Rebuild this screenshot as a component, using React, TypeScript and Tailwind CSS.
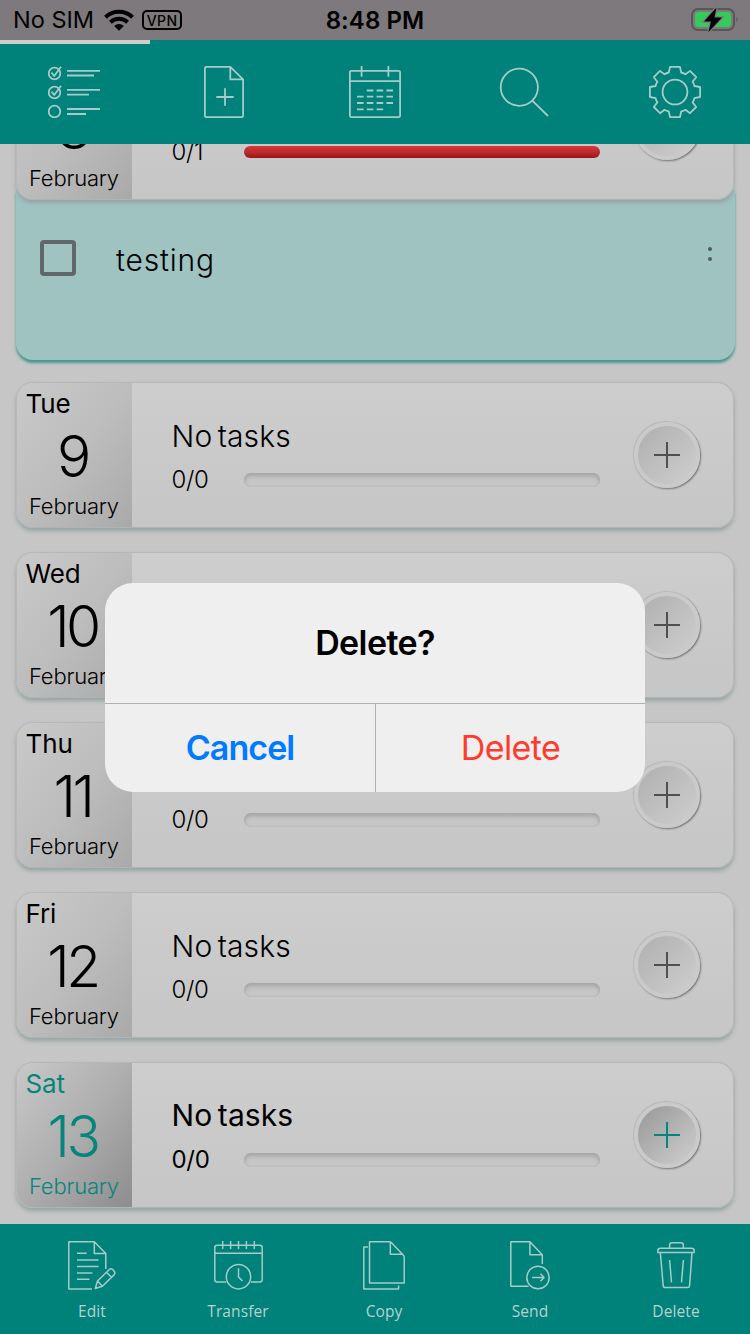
import type { ReactNode } from "react";

const strokeIcon = {
  fill: "none",
  stroke: "#a6cbc8",
  strokeWidth: 1.8,
  strokeLinejoin: "round" as const,
};

function TasksIcon() {
  return (
    <svg className="mr-[2px]" width="52" height="52" viewBox="0 0 52 52" {...strokeIcon}>
      <circle cx="6.5" cy="7.5" r="5.8" />
      <path d="M3.5 6.5 6.2 10 13 .8" />
      <circle cx="6.5" cy="26.5" r="5.8" />
      <path d="M3.5 25.5 6.2 29 13 19.8" />
      <circle cx="6.5" cy="45.5" r="5.8" />
      <path d="M19 4.8H52M19 9.5H46M19 23.8H52M19 28.7H41M19 43H52M19 48H38" />
    </svg>
  );
}

function NewPageIcon() {
  return (
    <svg className="mr-[2px]" width="40" height="52" viewBox="0 0 40 52" {...strokeIcon}>
      <path d="M26.3.9H2.2Q.9.9.9 2.2V49.8Q.9 51.1 2.2 51.1H37.8Q39.1 51.1 39.1 49.8V13.4ZM26.3.9V13.4H39.2M12.3 31H29.7M21 22.3V39.7" />
    </svg>
  );
}

function CalendarIcon() {
  return (
    <svg width="52" height="52" viewBox="0 0 52 52" {...strokeIcon}>
      <rect x=".9" y="4.8" width="50.2" height="46.3" rx="1.4" />
      <path d="M.8 15.2H51.2M12.6 0V10.7M39.4 0V10.7" />
      <path d="M17.8 24.5H45M8 30.7H45M8 37H45M8 43.3H35.5" strokeDasharray="6.6 3.2" />
    </svg>
  );
}

function SearchIcon() {
  return (
    <svg className="mr-[2px]" width="52" height="52" viewBox="0 0 52 52" {...strokeIcon}>
      <circle cx="21.3" cy="21.2" r="18.6" />
      <path d="M34.3 34.7 50 50" />
    </svg>
  );
}

function GearIcon() {
  return (
    <svg width="52" height="52" viewBox="0 0 52 52" {...strokeIcon}>
      <circle cx="26" cy="26" r="12.4" />
      <path d="M21 .9H31L32.2 6.5Q34.6 7 36.5 8.3L41 4.9 47.2 11.2 43.6 15.8Q44.9 17.7 45.4 20L51.1 21V31L45.4 32.2Q44.9 34.5 43.6 36.4L47.2 41 41 47.2 36.5 43.8Q34.6 45 32.2 45.5L31 51.1H21L19.8 45.5Q17.4 45 15.5 43.8L11 47.2 4.8 41 8.4 36.4Q7.1 34.5 6.6 32.2L.9 31V21L6.6 20Q7.1 17.7 8.4 15.8L4.8 11.2 11 4.9 15.5 8.3Q17.4 7 19.8 6.5Z" />
    </svg>
  );
}

function EditIcon() {
  return (
    <svg width="48" height="49" viewBox="0 0 48 49" {...strokeIcon} strokeWidth={1.5}>
      <path d="M24 48H.8V.8H26.3L37.8 12.5V28M26.3.7V12.5H37.8M9 12.3H18.7M9 18.9H30.5M9 25.4H30.5M9 31.9H24.5M9 38.2H21.5" />
      <path d="M27.3 47.5 29.5 40 41.6 28.3Q43 27 44.7 28.6L46.2 30.2Q47.6 32 46.2 33.6L34.4 45.2ZM29.5 40 34.4 45.2M38.5 31.2 43.4 36.3" />
    </svg>
  );
}

function TransferIcon() {
  return (
    <svg width="49" height="49" viewBox="0 0 49 49" {...strokeIcon} strokeWidth={1.5}>
      <path d="M12 41H3.2Q.8 41 .8 38.5V6.7Q.8 4.2 3.2 4.2H45.8Q48.2 4.2 48.2 6.7V38.5Q48.2 41 45.8 41H37M.7 12.3H48.3M8.7 0V8M16.6 0V8M24.5 0V8M32.4 0V8M40.3 0V8M24.5 27.3V36L28.5 40" />
      <circle cx="24.5" cy="35.7" r="12.2" />
    </svg>
  );
}

function CopyIcon() {
  return (
    <svg width="42" height="49" viewBox="0 0 42 49" {...strokeIcon} strokeWidth={1.5}>
      <path d="M26.3.8H6.5V42H41.2V16.4Q41.2 15 40 13.8L28.5 1.8Q27.6.8 26.3.8ZM27.3.9V13.2H39.3M5 6H.8V48H35.6V44.5" />
    </svg>
  );
}

function SendIcon() {
  return (
    <svg width="40" height="49" viewBox="0 0 40 49" {...strokeIcon} strokeWidth={1.5}>
      <path d="M18.5 45.3H.8V.8H19.9L32.3 13.7V23M19.9.7V13.7H32.3M22 36.5H34M30.5 32.8 34 36.5 30.5 40.2" />
      <circle cx="28" cy="36.5" r="11.2" />
    </svg>
  );
}

function TrashIcon() {
  return (
    <svg width="38" height="48" viewBox="0 0 38 48" {...strokeIcon} strokeWidth={1.5}>
      <path d="M3.4 7.3H34.6Q37.2 7.3 37.2 10V11.4H.8V10Q.8 7.3 3.4 7.3ZM12.6 7.3V4.2Q12.6 1.8 15 1.8H24Q26.4 1.8 26.4 4.2V7.3M3.3 11.4 6.2 44.6Q6.4 46.5 8.4 46.5H30.6Q32.4 46.5 32.6 44.6L35 11.4M12.6 19 14.5 41.5M26.4 19 24.5 41.5" />
    </svg>
  );
}

function Track({ full = false }: { full?: boolean }) {
  return full ? (
    <div className="h-3 w-[356px] rounded-full bg-linear-to-b from-[#d23b3c] via-[#bc2a2c] to-[#9a1516]" />
  ) : (
    <div className="h-[14px] w-[356px] rounded-full bg-[#c6c6c6] shadow-[inset_0_3px_4px_#a4a4a4,inset_0_0_2px_#b4b4b4]" />
  );
}

type Day = { name: string; date: string; title: string; count: string; today?: boolean; full?: boolean };

function DayCard({ day }: { day: Day }) {
  const t = day.today;
  return (
    <article className="relative z-10 flex h-[146px] shrink-0 overflow-hidden rounded-[17px] border border-[#b5b8b8] border-b-[#aeb5b5] bg-linear-to-b from-[#cdcdcd] to-[#c6c6c6] shadow-[0_3px_4px_#96a3a3]">
      <div
        className={`flex w-[115px] shrink-0 flex-col bg-linear-to-br ${
          t ? "from-[#c8c8c8] via-[#aeaeae] to-[#8d8d8d] text-[#07857c]" : "from-[#c9c9c9] via-[#bdbdbd] to-[#a9a9a9] text-black"
        }`}
      >
        <span className="mt-[6px] ml-[8.5px] h-[30px] text-[26px] leading-[30px] tracking-[-0.1px]">{day.name}</span>
        <span className="mt-[4px] mr-[4px] h-[65px] text-center text-[57px] leading-[67px] font-[260] tracking-[-3.5px]">{day.date}</span>
        <span className="mt-[5px] ml-[12px] h-[26px] text-[22px] leading-[26px] font-light tracking-[-0.2px]">February</span>
      </div>
      <div className="flex flex-1 flex-col pl-[39.5px]">
        <h2
          className={`h-9 text-[30px] leading-9 tracking-[0.1px] [word-spacing:-3px] ${t ? "mt-[34px] font-normal" : "mt-[35px] font-[350]"}`}
        >
          {day.title}
        </h2>
        <div className={`flex h-7 items-center ${t ? "mt-[13px]" : "mt-[12px]"}`}>
          <span className={`w-[72.5px] text-[24px] leading-7 tracking-[-0.3px] ${t ? "font-normal" : "font-light"}`}>{day.count}</span>
          <Track full={day.full} />
        </div>
      </div>
      <button
        className={`mt-[39px] mr-[33px] flex size-[66px] shrink-0 items-center justify-center rounded-full border-[4px] border-[#cacaca] bg-linear-to-br shadow-[1px_1px_2px_#6f6f6f,-1px_-1px_1px_#bababa] ${
          t ? "from-[#979797] to-[#cfcfcf]" : "from-[#afafaf] to-[#cecece]"
        }`}
      >
        <svg width="26" height="26" viewBox="0 0 26 26" stroke={t ? "#07857c" : "#505050"} strokeWidth="2">
          <path d="M0 13H26M13 0V26" />
        </svg>
      </button>
    </article>
  );
}

const days: Day[] = [
  { name: "Tue", date: "9", title: "No tasks", count: "0/0" },
  { name: "Wed", date: "10", title: "No tasks", count: "0/0" },
  { name: "Thu", date: "11", title: "No tasks", count: "0/0" },
  { name: "Fri", date: "12", title: "No tasks", count: "0/0" },
  { name: "Sat", date: "13", title: "No tasks", count: "0/0", today: true },
];

function Action({ icon, label }: { icon: ReactNode; label: string }) {
  return (
    <button className="flex w-[146px] flex-col items-center">
      <span className="flex h-[50px] items-start">{icon}</span>
      <span className="mt-[8px] font-['Open_Sans','Noto_Sans',sans-serif] text-[15.5px] leading-6 tracking-[0.1px] text-[#b5d2cf]">{label}</span>
    </button>
  );
}

export default function App() {
  return (
    <div className="relative flex h-[1334px] w-[750px] flex-col overflow-hidden bg-[#c7c6c6] font-['Inter','Liberation_Sans',sans-serif] text-black">
      <div className="grid h-10 shrink-0 grid-cols-3 items-center bg-[#7d797c]">
        <div className="flex items-center pl-[13px]">
          <span className="text-[23.5px] leading-10">No SIM</span>
          <svg className="ml-[10px]" width="30" height="22" viewBox="0 0 30 22" fill="none" stroke="black" strokeWidth="4">
            <path d="M1.5 8.2A19.5 19.5 0 0 1 28.5 8.2M6.4 13.2A12.5 12.5 0 0 1 23.6 13.2" />
            <path d="M10.2 17A7 7 0 0 1 19.8 17L15 21.8Z" fill="black" stroke="none" />
          </svg>
          <span className="ml-[8px] flex h-5 w-10 items-center justify-center rounded-[5px] border-2 border-black text-[14px] font-medium tracking-[0.4px]">VPN</span>
        </div>
        <span className="pt-px text-center text-[24px] font-semibold tracking-[0.1px]">8:48 PM</span>
        <div className="flex justify-end pr-[11px] pb-px">
          <svg width="48" height="26" viewBox="0 0 48 26">
            <rect x="1" y="2" width="42" height="21" rx="6" fill="none" stroke="#59565a" strokeWidth="2" />
            <rect x="4" y="5" width="36" height="15" rx="3.5" fill="#34cb5a" />
            <path d="M45.5 9.5Q48 12.5 45.5 15.5Z" fill="#59565a" />
            <path d="M25.5.5 13 14.5H20L17.5 25 31 10.5H23.5Z" fill="black" stroke="#7d797c" strokeWidth="2.5" paintOrder="stroke" />
          </svg>
        </div>
      </div>

      <header className="relative z-20 grid h-[104px] shrink-0 grid-cols-5 place-items-center bg-[#00817a]">
        <div className="absolute top-0 left-0 h-1 w-[150px] bg-[#cdcdcc]" />
        <TasksIcon />
        <NewPageIcon />
        <CalendarIcon />
        <SearchIcon />
        <GearIcon />
      </header>

      <main className="min-h-0 flex-1 overflow-hidden px-4">
        <div className="-mt-[90px] flex flex-col">
          <DayCard day={{ name: "Mon", date: "8", title: "testing", count: "0/1", full: true }} />
          <section className="-mx-[0.5px] -mt-[10px] flex h-[170px] shrink-0 rounded-b-[17px] bg-[#9fc3c1] shadow-[0_3px_3px_#45988f]">
            <span className="mt-[50px] ml-[24.5px] size-9 shrink-0 rounded-[4px] border-4 border-[#606669]" />
            <span className="mt-[52px] ml-10 flex-1 text-[30px] leading-9 font-[350] tracking-[0.8px]">testing</span>
            <span className="mt-[57px] mr-[22.5px] flex flex-col gap-[6px]">
              <i className="block size-1 rounded-full bg-[#505c60]" />
              <i className="block size-1 rounded-full bg-[#505c60]" />
            </span>
          </section>
          <div className="mt-[22px] flex flex-col gap-6">
            {days.map((d) => (
              <DayCard key={d.name} day={d} />
            ))}
          </div>
        </div>
      </main>

      <footer className="z-20 flex h-[110px] shrink-0 bg-[#00817a] pt-[17px] pl-[19px]">
        <Action icon={<EditIcon />} label="Edit" />
        <Action icon={<TransferIcon />} label="Transfer" />
        <Action icon={<CopyIcon />} label="Copy" />
        <Action icon={<SendIcon />} label="Send" />
        <Action icon={<TrashIcon />} label="Delete" />
      </footer>

      <div role="alertdialog" className="absolute top-[583px] left-[105px] z-30 flex h-[209px] w-[540px] flex-col overflow-hidden rounded-[28px] bg-[#efefef]">
        <h1 className="flex h-[120px] items-center justify-center pb-px text-[34px] font-semibold tracking-[-0.6px]">Delete?</h1>
        <div className="flex flex-1 border-t border-[#b0b1b2]">
          <button className="w-[270px] pb-[2px] text-[34px] font-semibold tracking-[-0.95px] text-[#007aff]">Cancel</button>
          <button className="flex-1 border-l border-[#b0b1b2] pb-[2px] text-[34px] tracking-[-0.6px] text-[#ff3b30]">Delete</button>
        </div>
      </div>
    </div>
  );
}
